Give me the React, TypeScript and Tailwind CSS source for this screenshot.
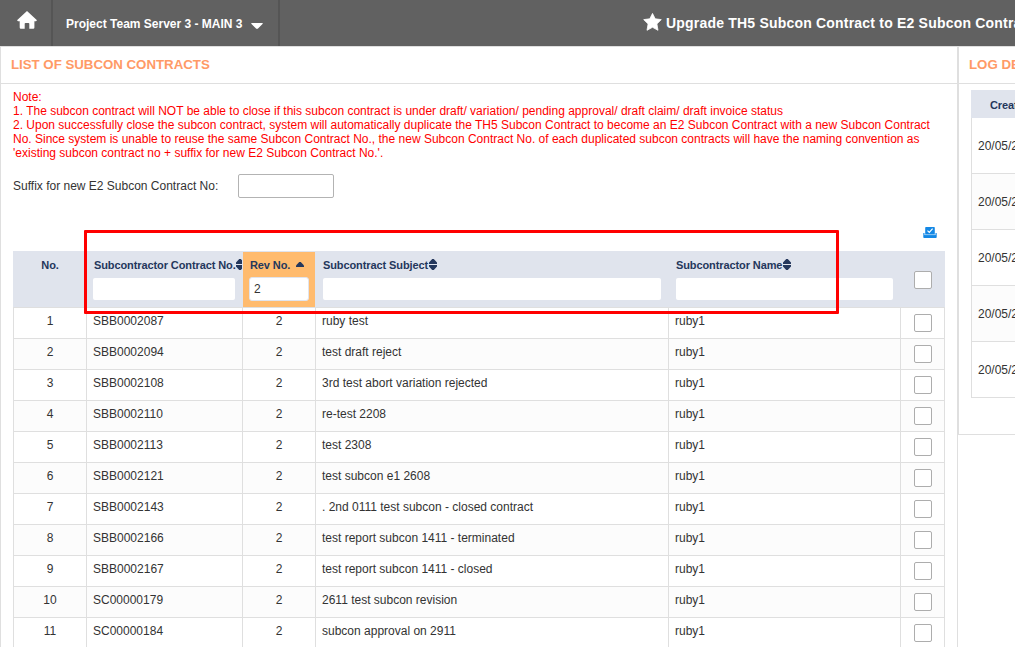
import React from 'react';

interface Contract {
  no: string;
  rev: number;
  subject: string;
  subcontractor: string;
}

const contracts: Contract[] = [
  { no: 'SBB0002087', rev: 2, subject: 'ruby test', subcontractor: 'ruby1' },
  { no: 'SBB0002094', rev: 2, subject: 'test draft reject', subcontractor: 'ruby1' },
  { no: 'SBB0002108', rev: 2, subject: '3rd test abort variation rejected', subcontractor: 'ruby1' },
  { no: 'SBB0002110', rev: 2, subject: 're-test 2208', subcontractor: 'ruby1' },
  { no: 'SBB0002113', rev: 2, subject: 'test 2308', subcontractor: 'ruby1' },
  { no: 'SBB0002121', rev: 2, subject: 'test subcon e1 2608', subcontractor: 'ruby1' },
  { no: 'SBB0002143', rev: 2, subject: '. 2nd 0111 test subcon - closed contract', subcontractor: 'ruby1' },
  { no: 'SBB0002166', rev: 2, subject: 'test report subcon 1411 - terminated', subcontractor: 'ruby1' },
  { no: 'SBB0002167', rev: 2, subject: 'test report subcon 1411 - closed', subcontractor: 'ruby1' },
  { no: 'SC00000179', rev: 2, subject: '2611 test subcon revision', subcontractor: 'ruby1' },
  { no: 'SC00000184', rev: 2, subject: 'subcon approval on 2911', subcontractor: 'ruby1' },
];

const logDates = ['20/05/2024', '20/05/2024', '20/05/2024', '20/05/2024', '20/05/2024'];

const gridCols = 'grid grid-cols-[73px_156px_73px_353px_232px_45px]';

function SortIcon() {
  return (
    <svg width="8" height="12" viewBox="0 0 8 12" className="shrink-0" fill="#24375c">
      <path d="M3.2 0h1.6L8 3.6V5H0V3.6zM3.2 11h1.6L8 7.4V6H0v1.4z" />
    </svg>
  );
}

function Checkbox() {
  return <input type="checkbox" className="block h-[18px] w-[18px] appearance-none rounded-[2px] border border-[#adadad] bg-white" />;
}

function TopBar() {
  return (
    <header className="flex h-[46px] bg-[#616161] font-bold text-white">
      <div className="w-[53px] shrink-0 border-r-2 border-[#555] pl-[17px] pt-[11px]">
        <svg width="20" height="18" viewBox="0 0 20 18" fill="#fff">
          <path d="M10 0L20 9.2l-1 1h-1.6v6.3q0 1.2-1.2 1.2h-3.9v-4.9q0-.8-.8-.8h-3q-.8 0-.8.8v4.9H3.9q-1.2 0-1.2-1.2v-6.3H1L0 9.2z" />
        </svg>
      </div>
      <div className="flex w-[227px] shrink-0 border-r-2 border-[#555] pl-[13px] pt-[16px] text-[12px] leading-[16px]">
        <span className="w-[178px] shrink-0 whitespace-nowrap">Project Team Server 3 - MAIN 3</span>
        <svg width="12" height="8" viewBox="0 0 12 8" className="ml-[7px] mt-[6px] shrink-0" fill="#fff">
          <path d="M.5 1h11q.5.5 0 1L7 6.6q-1 .8-2 0L.5 2q-.5-.5 0-1z" />
        </svg>
      </div>
      <div className="flex pl-[363px] pt-[13px]">
        <svg width="19" height="18" viewBox="0 0 19 18" fill="#fff" className="shrink-0">
          <path d="M9.5.4l2.7 5.4 6.1.8-4.4 4.3 1.1 6.4-5.5-3-5.5 3 1.1-6.4L.7 6.6l6.1-.8z" stroke="#fff" strokeWidth=".8" strokeLinejoin="round" />
        </svg>
        <span className="ml-[4px] mt-[2px] whitespace-nowrap text-[14px] leading-[16px] tracking-[0.2px]">
          Upgrade TH5 Subcon Contract to E2 Subcon Contract
        </span>
      </div>
    </header>
  );
}

function TableHead() {
  return (
    <div className={`${gridCols} h-[57px] border-b border-[#dfdfdf] bg-[#e0e4ed] text-[11px] font-bold tracking-[-0.1px] text-[#24375c]`}>
      <div className="pl-px pt-[7px] text-center leading-[14px]">No.</div>
      <div className="overflow-hidden pl-[7px] pt-[7px]">
        <div className="flex items-center whitespace-nowrap leading-[14px]">
          <span className="w-[143px] shrink-0 pl-px">Subcontractor Contract No.</span>
          <SortIcon />
        </div>
        <input className="mt-[6px] block h-[22px] w-[142px] rounded-[2px] bg-white" />
      </div>
      <div className="mt-px ml-px bg-[#ffbb6e] pl-[7px] pt-[6px]">
        <div className="flex items-center whitespace-nowrap leading-[14px]">
          <span className="w-[46px]">Rev No.</span>
          <svg width="8" height="5" viewBox="0 0 8 5" fill="#24375c" className="mb-[2px]">
            <path d="M3.2 0h1.6L8 3.5V5H0V3.5z" />
          </svg>
        </div>
        <input
          defaultValue="2"
          className="-ml-px mt-[5px] block h-[24px] w-[60px] rounded-[3px] border border-[#e0e4ed] bg-white px-[4px] text-[12px] font-normal text-[#333]"
        />
      </div>
      <div className="pl-[8px] pt-[7px]">
        <div className="flex items-center whitespace-nowrap leading-[14px]">
          <span className="w-[106px]">Subcontract Subject</span>
          <SortIcon />
        </div>
        <input className="mt-[6px] block h-[22px] w-[338px] rounded-[2px] bg-white" />
      </div>
      <div className="pl-[8px] pt-[7px]">
        <div className="flex items-center whitespace-nowrap leading-[14px]">
          <span className="w-[107px]">Subcontractor Name</span>
          <SortIcon />
        </div>
        <input className="mt-[6px] block h-[22px] w-[217px] rounded-[2px] bg-white" />
      </div>
      <div className="pl-[14px] pt-[20px]">
        <Checkbox />
      </div>
    </div>
  );
}

function ContractRow({ contract, index }: { contract: Contract; index: number }) {
  return (
    <div className={`${gridCols} h-[31px] border-b border-[#dfdfdf] leading-[14px] ${index % 2 === 1 ? 'bg-[#fcfcfc]' : 'bg-white'}`}>
      <div className="border-l border-[#dfdfdf] pt-[6px] text-center">{index + 1}</div>
      <div className="border-l border-[#dfdfdf] pl-[6px] pt-[6px]">{contract.no}</div>
      <div className="border-l border-[#dfdfdf] pt-[6px] text-center">{contract.rev}</div>
      <div className="border-l border-[#dfdfdf] pl-[6px] pt-[6px]">{contract.subject}</div>
      <div className="border-l border-[#dfdfdf] pl-[6px] pt-[6px]">{contract.subcontractor}</div>
      <div className="border-x border-[#dfdfdf] pl-[13px] pt-[6px]">
        <Checkbox />
      </div>
    </div>
  );
}

function ContractsPanel() {
  return (
    <section className="w-[958px] shrink-0 border-x border-t border-[#dfdfdf]">
      <h2 className="h-[37px] border-b border-[#dfdfdf] pl-[10px] pt-[10px] text-[13.3px] font-bold leading-[16px] tracking-[-0.03px] text-[#ff9a66]">
        LIST OF SUBCON CONTRACTS
      </h2>
      <div className="pl-[12px]">
        <div className="whitespace-nowrap pt-[6px] leading-[14px] text-[#f00]">
          <p>Note:</p>
          <p>1. The subcon contract will NOT be able to close if this subcon contract is under draft/ variation/ pending approval/ draft claim/ draft invoice status</p>
          <p>2. Upon successfully close the subcon contract, system will automatically duplicate the TH5 Subcon Contract to become an E2 Subcon Contract with a new Subcon Contract</p>
          <p>No. Since system is unable to reuse the same Subcon Contract No., the new Subcon Contract No. of each duplicated subcon contracts will have the naming convention as</p>
          <p>'existing subcon contract no + suffix for new E2 Subcon Contract No.'.</p>
        </div>
        <div className="mt-[14px] flex h-[24px] items-center">
          <label className="w-[225px]">Suffix for new E2 Subcon Contract No:</label>
          <input className="h-[24px] w-[96px] rounded-[2px] border border-[#b3b3b3] bg-white" />
        </div>
        <div className="flex h-[53px] justify-end pr-[20px] pt-[29px]">
          <svg width="14" height="11" viewBox="0 0 14 11" fill="#1488e5">
            <path d="M3 0h8q.8 0 .8.8V7.4H2.2V.8Q2.2 0 3 0z" />
            <path d="M.3 6h1.2v2.1h11V6h1.2v4.2q0 .8-.8.8H1.1q-.8 0-.8-.8z" />
            <path d="M1.5 7.8h11" stroke="#6fb8f2" strokeWidth=".6" />
            <path d="M4.5 3.6l1.8 1.8 3.3-3.7" fill="none" stroke="#fff" strokeWidth="1.2" />
          </svg>
        </div>
        {/* table with the highlighted filter area on top of it */}
        <div className="relative w-[932px]">
          <TableHead />
          {contracts.map((contract, index) => (
            <ContractRow key={contract.no} contract={contract} index={index} />
          ))}
          <div className="pointer-events-none absolute left-[71px] top-[-21px] h-[84px] w-[755px] rounded-[1px] border-[3px] border-[#f00]" />
        </div>
      </div>
    </section>
  );
}

function LogPanel() {
  return (
    <section className="h-[389px] w-[300px] shrink-0 border-y border-l border-[#dfdfdf]">
      <h2 className="h-[37px] border-b border-[#dfdfdf] pl-[10px] pt-[10px] text-[13.3px] font-bold leading-[16px] tracking-[-0.03px] text-[#ff9a66]">
        LOG DETAILS
      </h2>
      <div className="ml-[12px] mt-[6px]">
        <div className="h-[28px] bg-[#e0e4ed] pl-[19px] pt-[8px] text-[11px] font-bold leading-[14px] tracking-[-0.1px] text-[#24375c]">
          Created Date
        </div>
        {logDates.map((date, index) => (
          <div
            key={index}
            className={`flex h-[56px] items-center border-b border-l border-[#dfdfdf] pl-[6px] ${index % 2 === 1 ? 'bg-[#fcfcfc]' : 'bg-white'}`}
          >
            {date}
          </div>
        ))}
      </div>
    </section>
  );
}

export default function App() {
  return (
    <div className="h-[647px] w-[1015px] overflow-hidden bg-white font-['Liberation_Sans',Arial,sans-serif] text-[12px] text-[#333]">
      <TopBar />
      <main className="flex">
        <ContractsPanel />
        <LogPanel />
      </main>
    </div>
  );
}
